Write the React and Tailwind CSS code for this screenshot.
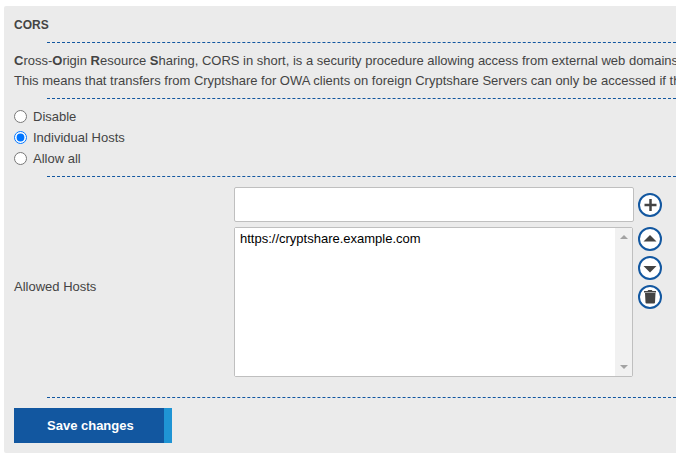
const PlusIcon = () => (
  <svg className="w-full h-full" viewBox="0 0 20 20" fill="none" stroke="#444" strokeWidth="2.5">
    <path d="M10.500 4v12M4.500 10h12" />
  </svg>
);

const UpIcon = () => (
  <svg className="w-full h-full" viewBox="0 0 20 20" fill="#444">
    <path d="M10 6l6.500 6.500h-13z" />
  </svg>
);

const DownIcon = () => (
  <svg className="w-full h-full" viewBox="0 0 20 20" fill="#444">
    <path d="M10 14.500L16.500 8h-13z" />
  </svg>
);

const TrashIcon = () => (
  <svg className="w-full h-full" viewBox="0 0 20 20" fill="#444">
    <path d="M4 4h3.500l.8-1h3.400l.8 1H16v1.500H4zM5 6h10.500l-.5 9.500a1 1 0 0 1-1 1H6.500a1 1 0 0 1-1-1z" />
  </svg>
);

const modes = [
  { id: 'disable', label: 'Disable' },
  { id: 'individual', label: 'Individual Hosts' },
  { id: 'all', label: 'Allow all' },
];

const listActions = [
  { label: 'Move up', icon: UpIcon },
  { label: 'Move down', icon: DownIcon },
  { label: 'Remove host', icon: TrashIcon },
];

const Divider = () => <hr className="ml-[43px] border-0 border-t border-dashed border-[#1257a0]" />;

const RoundButton = ({ label, icon: Icon }) => (
  <button
    type="button"
    aria-label={label}
    className="block w-6 h-6 shrink-0 rounded-full border-2 border-[#1257a0] bg-white"
  >
    <Icon />
  </button>
);

export default function App() {
  return (
    <div className="bg-white pt-[6px] pl-1 pb-[10px] overflow-hidden font-['Liberation_Sans',Arial,sans-serif] text-[13px] leading-5 text-[#444]">
      <form className="bg-[#ebebeb] rounded-l-[2px] pt-[9px] pb-[10px]" onSubmit={(e) => e.preventDefault()}>
        <h2 className="px-[10px] mb-[7px] text-xs leading-5 font-bold">CORS</h2>
        <Divider />
        <p className="pl-[10px] pt-2 pb-[7px] whitespace-nowrap overflow-hidden">
          <b>C</b>ross-<b>O</b>rigin <b>R</b>esource <b>S</b>haring, CORS in short, is a security procedure allowing
          access from external web domains
          <br />
          This means that transfers from Cryptshare for OWA clients on foreign Cryptshare Servers can only be accessed
          if the
        </p>
        <Divider />
        <div className="px-[10px] py-[7px]">
          {modes.map((mode) => (
            <div key={mode.id} className="flex items-center gap-[6px] h-[21px]">
              <input
                type="radio"
                name="mode"
                id={mode.id}
                defaultChecked={mode.id === 'individual'}
                className="w-[13px] h-[13px]"
              />
              <label htmlFor={mode.id}>{mode.label}</label>
            </div>
          ))}
        </div>
        <Divider />
        <div className="flex items-center pl-[10px] pr-[14px] py-[10px]">
          <label htmlFor="hosts" className="w-[220px] shrink-0">Allowed Hosts</label>
          <div className="flex-1 min-w-0 pb-[10px] space-y-[5px]">
            <div className="flex items-center gap-1">
              <input
                type="text"
                aria-label="New host"
                className="flex-1 min-w-0 h-[35px] px-[5px] bg-white border border-[#bfbfbf] rounded-[2px] text-black"
              />
              <RoundButton label="Add host" icon={PlusIcon} />
            </div>
            <div className="flex items-start gap-[5px]">
              <div className="flex flex-1 min-w-0 h-[150px] bg-white border border-[#bfbfbf] rounded-[2px]">
                <select id="hosts" size={8} className="flex-1 min-w-0 px-[3px] py-[3px] bg-white text-black outline-none">
                  <option className="px-[2px]">https://cryptshare.example.com</option>
                </select>
                <div className="w-[17px] bg-[#f1f1f1] flex flex-col items-center justify-between py-[7px]">
                  <svg className="w-2 h-1" viewBox="0 0 8 4" fill="#a3a3a3">
                    <path d="M4 0l4 4H0z" />
                  </svg>
                  <svg className="w-2 h-1" viewBox="0 0 8 4" fill="#a3a3a3">
                    <path d="M4 4l4-4H0z" />
                  </svg>
                </div>
              </div>
              <div className="flex flex-col gap-[5px]">
                {listActions.map((action) => (
                  <RoundButton key={action.label} {...action} />
                ))}
              </div>
            </div>
          </div>
        </div>
        <Divider />
        <button
          type="submit"
          className="block mt-[10px] ml-[10px] h-[35px] pl-[33px] pr-[30px] bg-[#1257a0] border-r-8 border-[#1f94d4] font-bold text-white"
        >
          Save changes
        </button>
      </form>
    </div>
  );
}
